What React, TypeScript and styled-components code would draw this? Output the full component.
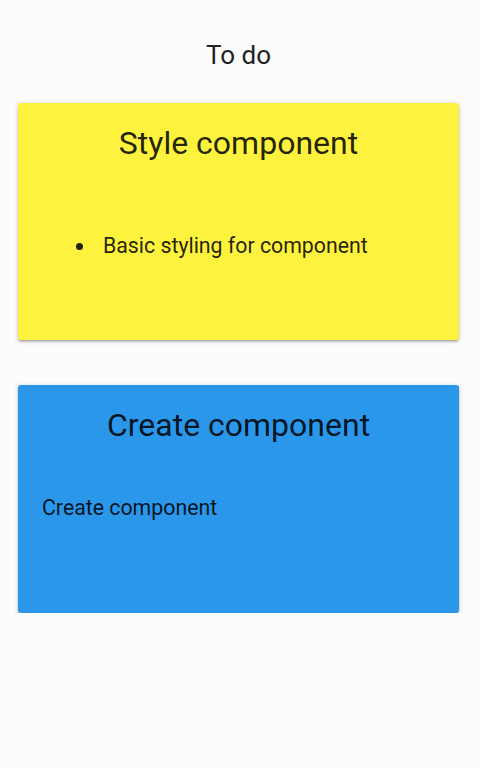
import React from 'react';
import styled, { createGlobalStyle } from 'styled-components';

const GlobalStyle = createGlobalStyle`
  body {
    margin: 0;
    background: #fdfcfd;
    font-family: Roboto, "Liberation Sans", sans-serif;
    color: rgba(0, 0, 0, 0.87);
  }
`;

type Tone = 'yellow' | 'blue';

const tones: Record<Tone, string> = {
  yellow: '#fdf23e',
  blue: '#2a97eb',
};

const App: React.FC = () => (
  <Page>
    <GlobalStyle />
    <Heading>To do</Heading>
    <Board>
      <Card tone="yellow" $bottom={80}>
        <CardTitle>Style component</CardTitle>
        <Tasks>
          <li>Basic styling for component</li>
        </Tasks>
      </Card>
      <Card tone="blue" $bottom={91}>
        <CardTitle>Create component</CardTitle>
        <Note>Create component</Note>
      </Card>
    </Board>
  </Page>
);

const Page = styled.main`
  padding: 41px 21px 0 18px;
`;

const Heading = styled.h1`
  margin: 0;
  font-size: 26px;
  font-weight: 400;
  line-height: 28px;
  text-align: center;
  color: #222;
`;

const Board = styled.section`
  display: flex;
  flex-direction: column;
  gap: 45px;
  margin-top: 34px;
`;

const Card = styled.article<{ tone: Tone; $bottom: number }>`
  background: ${(p) => tones[p.tone]};
  border-radius: 3px;
  padding: 20px 24px ${(p) => p.$bottom}px;
  box-shadow: 0 2px 2px rgba(0, 0, 0, 0.14), 0 3px 1px -2px rgba(0, 0, 0, 0.12),
    0 1px 5px rgba(0, 0, 0, 0.2);
`;

const CardTitle = styled.h2`
  margin: 0;
  font-size: 32px;
  font-weight: 400;
  line-height: 40px;
  text-align: center;
`;

const Tasks = styled.ul`
  margin: 69px 0 0;
  padding-left: 54px;
  font-size: 21.3px;
  line-height: 28px;

  li {
    padding-left: 7px;
  }
`;

const Note = styled.p`
  margin: 49px 0 0;
  font-size: 21.3px;
  line-height: 28px;
`;

export default App;
